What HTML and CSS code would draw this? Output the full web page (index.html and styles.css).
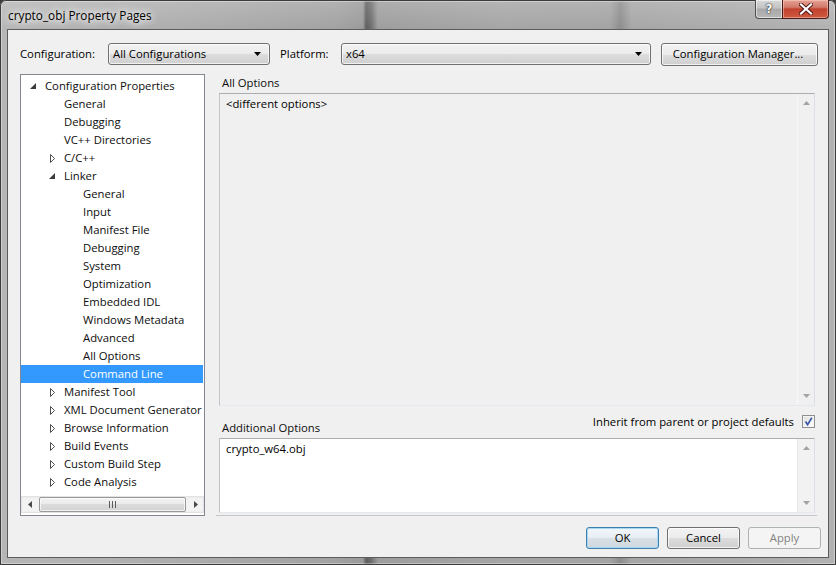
FILE: index.html
```html
<!DOCTYPE html>
<html>
<head>
<meta charset="utf-8">
<title>crypto_obj Property Pages</title>
<link rel="stylesheet" href="styles.css">
</head>
<body>
<div class="window">
  <div class="titlebar">
    <span class="title">crypto_obj Property Pages</span>
    <div class="caption">
      <div class="cap-help">?</div>
      <div class="cap-close">
        <svg width="14" height="12" viewBox="0 0 14 12"><path d="M2 1.5L12 10.5M12 1.5L2 10.5" stroke="#4a1410" stroke-width="4" stroke-linecap="square"/><path d="M2 1.5L12 10.5M12 1.5L2 10.5" stroke="#fff" stroke-width="2.2" stroke-linecap="square"/></svg>
      </div>
    </div>
  </div>
  <div class="client">
    <div class="toprow">
      <span class="lbl lbl-config">Configuration:</span>
      <div class="combo combo-config"><span class="combo-text">All Configurations</span><svg class="combo-arrow" width="7" height="4" viewBox="0 0 7 4"><path d="M0 0H7L3.5 4Z" fill="#000"/></svg></div>
      <span class="lbl lbl-platform">Platform:</span>
      <div class="combo combo-platform"><span class="combo-text">x64</span><svg class="combo-arrow" width="7" height="4" viewBox="0 0 7 4"><path d="M0 0H7L3.5 4Z" fill="#000"/></svg></div>
      <div class="btn btn-cfgmgr">Configuration Manager...</div>
    </div>

    <div class="main">
      <div class="tree">
        <ul class="nodes">
          <li class="node l0"><span class="exp"><svg width="6" height="6" viewBox="0 0 6 6"><path d="M6 0V6H0Z" fill="#3c3c3c"/></svg></span>Configuration Properties</li>
          <li class="node l1"><span class="exp"></span>General</li>
          <li class="node l1"><span class="exp"></span>Debugging</li>
          <li class="node l1"><span class="exp"></span>VC++ Directories</li>
          <li class="node l1"><span class="exp col"><svg width="5" height="9" viewBox="0 0 5 9"><path d="M0.5 0.5V8.5L4.5 4.5Z" fill="none" stroke="#4f4f4f"/></svg></span>C/C++</li>
          <li class="node l1"><span class="exp"><svg width="6" height="6" viewBox="0 0 6 6"><path d="M6 0V6H0Z" fill="#3c3c3c"/></svg></span>Linker</li>
          <li class="node l2"><span class="exp"></span>General</li>
          <li class="node l2"><span class="exp"></span>Input</li>
          <li class="node l2"><span class="exp"></span>Manifest File</li>
          <li class="node l2"><span class="exp"></span>Debugging</li>
          <li class="node l2"><span class="exp"></span>System</li>
          <li class="node l2"><span class="exp"></span>Optimization</li>
          <li class="node l2"><span class="exp"></span>Embedded IDL</li>
          <li class="node l2"><span class="exp"></span>Windows Metadata</li>
          <li class="node l2"><span class="exp"></span>Advanced</li>
          <li class="node l2"><span class="exp"></span>All Options</li>
          <li class="node l2 selected"><span class="exp"></span>Command Line</li>
          <li class="node l1"><span class="exp col"><svg width="5" height="9" viewBox="0 0 5 9"><path d="M0.5 0.5V8.5L4.5 4.5Z" fill="none" stroke="#4f4f4f"/></svg></span>Manifest Tool</li>
          <li class="node l1"><span class="exp col"><svg width="5" height="9" viewBox="0 0 5 9"><path d="M0.5 0.5V8.5L4.5 4.5Z" fill="none" stroke="#4f4f4f"/></svg></span>XML Document Generator</li>
          <li class="node l1"><span class="exp col"><svg width="5" height="9" viewBox="0 0 5 9"><path d="M0.5 0.5V8.5L4.5 4.5Z" fill="none" stroke="#4f4f4f"/></svg></span>Browse Information</li>
          <li class="node l1"><span class="exp col"><svg width="5" height="9" viewBox="0 0 5 9"><path d="M0.5 0.5V8.5L4.5 4.5Z" fill="none" stroke="#4f4f4f"/></svg></span>Build Events</li>
          <li class="node l1"><span class="exp col"><svg width="5" height="9" viewBox="0 0 5 9"><path d="M0.5 0.5V8.5L4.5 4.5Z" fill="none" stroke="#4f4f4f"/></svg></span>Custom Build Step</li>
          <li class="node l1"><span class="exp col"><svg width="5" height="9" viewBox="0 0 5 9"><path d="M0.5 0.5V8.5L4.5 4.5Z" fill="none" stroke="#4f4f4f"/></svg></span>Code Analysis</li>
        </ul>
        <div class="hscroll">
          <div class="sb-btn"><svg width="4" height="7" viewBox="0 0 4 7"><path d="M4 0V7L0 3.5Z" fill="#4a4a4a"/></svg></div>
          <div class="sb-track">
            <div class="sb-thumb"><svg width="7" height="7" viewBox="0 0 7 7"><path d="M0.5 0V7M3.5 0V7M6.5 0V7" stroke="#5c5c5c" stroke-width="1"/></svg></div>
          </div>
          <div class="sb-btn"><svg width="4" height="7" viewBox="0 0 4 7"><path d="M0 0V7L4 3.5Z" fill="#4a4a4a"/></svg></div>
        </div>
      </div>

      <div class="props">
        <div class="cap-label cap-all">All Options</div>
        <div class="textbox tb-all">
          <div class="tb-content">&lt;different options&gt;</div>
          <div class="vscroll">
            <svg width="7" height="4" viewBox="0 0 7 4"><path d="M0 4H7L3.5 0Z" fill="#a3a3a3"/></svg>
            <svg width="7" height="4" viewBox="0 0 7 4"><path d="M0 0H7L3.5 4Z" fill="#a3a3a3"/></svg>
          </div>
        </div>
        <div class="midrow">
          <div class="cap-label cap-add">Additional Options</div>
          <div class="inherit">
            <span class="inherit-text">Inherit from parent or project defaults</span>
            <span class="check"><svg width="11" height="11" viewBox="0 0 11 11"><path d="M2.5 5.5L4.6 8.6L8.8 1.8" fill="none" stroke="#3b58a6" stroke-width="1.7"/></svg></span>
          </div>
        </div>
        <div class="textbox tb-add">
          <div class="tb-content">crypto_w64.obj</div>
          <div class="vscroll">
            <svg width="7" height="4" viewBox="0 0 7 4"><path d="M0 4H7L3.5 0Z" fill="#a3a3a3"/></svg>
            <svg width="7" height="4" viewBox="0 0 7 4"><path d="M0 0H7L3.5 4Z" fill="#a3a3a3"/></svg>
          </div>
        </div>
        <div class="sep"></div>
      </div>
    </div>

    <div class="buttons">
      <div class="btn btn-ok">OK</div>
      <div class="btn btn-cancel">Cancel</div>
      <div class="btn btn-apply">Apply</div>
    </div>
  </div>
</div>
</body>
</html>
```
FILE: styles.css
```css
* { box-sizing: border-box; }

html, body {
  margin: 0;
  padding: 0;
}

body {
  width: 836px;
  height: 565px;
  overflow: hidden;
  background: #3a3a3a;
  font-family: "Open Sans", "Noto Sans", sans-serif;
  font-size: 11.3px;
  color: #000;
}

.window {
  width: 836px;
  height: 565px;
  padding: 0 7px 7px 7px;
  display: flex;
  flex-direction: column;
  border-radius: 6px 6px 0 0;
  background:
    linear-gradient(to bottom, rgba(255,255,255,0.18) 0, rgba(255,255,255,0.05) 22px, rgba(0,0,0,0) 30px),
    linear-gradient(to right,
      #b6b6b6 0, #adadad 20%, #a2a2a2 40%, #9a9a9a 43.4%,
      #5e5e5e 43.8%, #6e6e6e 44.4%, #9d9d9d 45.2%,
      #a5a5a5 60%, #a3a3a3 73%, #8c8c8c 74.2%, #a6a6a6 75.5%,
      #acacac 90%, #b2b2b2 100%);
  box-shadow: inset 0 0 0 1px #3c3c3c, inset 0 0 0 2px rgba(255,255,255,0.35);
}

/* ---------- title bar ---------- */
.titlebar {
  height: 29px;
  display: flex;
  align-items: flex-start;
  flex: none;
}

.title {
  margin: 7px 0 0 1px;
  line-height: 16px;
  font-size: 11.8px;
  color: #000;
  text-shadow: 0 0 6px #fff, 0 0 10px rgba(255,255,255,0.9), 0 0 14px rgba(255,255,255,0.7);
}

.caption {
  margin-left: auto;
  display: flex;
  margin-right: 0;
}

.cap-help {
  width: 27px;
  height: 19px;
  border: 1px solid #4d4d4d;
  border-top: none;
  border-right: none;
  border-radius: 0 0 0 4px;
  background: linear-gradient(to bottom, #d8d8d8 0, #c3c3c3 45%, #a8a8a8 50%, #b8b8b8 100%);
  box-shadow: inset 0 0 0 1px rgba(255,255,255,0.55);
  font-family: "DejaVu Sans", sans-serif;
  font-weight: bold;
  font-size: 12px;
  line-height: 18px;
  text-align: center;
  color: #fff;
  text-shadow: 0 0 2px #222, 0 0 1px #000;
}

.cap-close {
  width: 47px;
  height: 19px;
  border: 1px solid #4a1a16;
  border-top: none;
  border-radius: 0 0 4px 0;
  background: linear-gradient(to bottom, #e5a195 0, #d27a6a 40%, #c2412f 50%, #cf5a3e 100%);
  box-shadow: inset 0 0 0 1px rgba(255,220,210,0.45);
  display: flex;
  align-items: center;
  justify-content: center;
}

/* ---------- client area ---------- */
.client {
  flex: 1;
  border: 1px solid #5c5c5c;
  background: #f0f0f0;
  display: flex;
  flex-direction: column;
  padding: 13px 0 8px 12px;
}

.toprow {
  height: 23px;
  display: flex;
  align-items: flex-start;
  flex: none;
}

.lbl {
  line-height: 22px;
  color: #000;
}

.lbl-config { width: 88px; }
.lbl-platform { width: 61px; margin-left: 10px; }

.combo {
  height: 22px;
  border: 1px solid #707070;
  border-radius: 3px;
  background: linear-gradient(to bottom, #f2f2f2 0, #ebebeb 50%, #dddddd 51%, #cfcfcf 100%);
  box-shadow: inset 0 0 0 1px rgba(255,255,255,0.7);
  display: flex;
  align-items: center;
  padding: 0 8px 0 4px;
}

.combo-text {
  flex: 1;
  line-height: 20px;
  color: #000;
}

.combo-config { width: 162px; }
.combo-platform { width: 310px; }

.btn {
  height: 22px;
  border: 1px solid #707070;
  border-radius: 3px;
  background: linear-gradient(to bottom, #f2f2f2 0, #ebebeb 50%, #dddddd 51%, #cfcfcf 100%);
  box-shadow: inset 0 0 0 1px rgba(255,255,255,0.75);
  text-align: center;
  line-height: 20px;
  color: #000;
}

.btn-cfgmgr {
  width: 157px;
  height: 23px;
  line-height: 20px;
  margin-left: 10px;
  padding-right: 3px;
}

/* ---------- main ---------- */
.main {
  margin-top: 8px;
  height: 442px;
  display: flex;
  gap: 14px;
  flex: none;
}

.tree {
  width: 185px;
  height: 442px;
  border: 1px solid #828790;
  background: #fff;
  display: flex;
  flex-direction: column;
}

.nodes {
  list-style: none;
  margin: 0;
  padding: 2px 0 0 0;
  flex: 1;
  overflow: hidden;
  white-space: nowrap;
}

.node {
  height: 18px;
  line-height: 18px;
  display: flex;
  align-items: center;
  color: #0d0d0d;
}

.node.l0 { padding-left: 9px; }
.node.l1 { padding-left: 28px; }
.node.l2 { padding-left: 47px; }

.exp {
  width: 15px;
  flex: none;
  display: flex;
  align-items: center;
  padding-left: 0;
}

.exp.col { padding-left: 1px; }

.node.selected {
  background: #3399ff;
  color: #fff;
  margin-right: 1px;
}

.hscroll {
  height: 17px;
  margin-bottom: 2px;
  display: flex;
  background: linear-gradient(to bottom, #e6e6e6 0, #f2f2f2 3px, #f4f4f4 14px, #e9e9e9 100%);
  box-shadow: inset 0 0 0 1px #e2e2e2;
  flex: none;
}

.sb-btn {
  width: 17px;
  display: flex;
  align-items: center;
  justify-content: center;
}

.sb-track {
  flex: 1;
  padding: 1px 1px 1px 1px;
  display: flex;
}

.sb-thumb {
  flex: 1;
  border: 1px solid #989898;
  border-radius: 2px;
  background: linear-gradient(to bottom, #f3f3f3 0, #ebebeb 45%, #dbdbdb 50%, #d3d3d3 100%);
  box-shadow: inset 0 0 0 1px rgba(255,255,255,0.7);
  display: flex;
  align-items: center;
  justify-content: center;
}

/* ---------- property panel ---------- */
.props {
  width: 596px;
  height: 442px;
  display: flex;
  flex-direction: column;
}

.cap-label {
  color: #0d0d0d;
  line-height: 16px;
}

.cap-all {
  height: 19px;
  padding: 1px 0 0 3px;
  flex: none;
}

.textbox {
  display: flex;
  border-style: solid;
  border-width: 1px;
  border-color: #abadb3 #dbdfe6 #e3e9ef #c2c4ca;
  flex: none;
}

.tb-all {
  height: 313px;
  background: #f0f0f0;
}

.tb-add {
  height: 75px;
  background: #fff;
}

.tb-content {
  flex: 1;
  padding: 2px 0 0 6px;
  line-height: 16px;
  color: #000;
}

.vscroll {
  width: 17px;
  display: flex;
  flex-direction: column;
  justify-content: space-between;
  align-items: center;
  padding: 7px 0 7px 0;
  background: #f2f2f2;
  border-left: 1px solid #e6e6e6;
}

.tb-all .vscroll {
  border-left-color: #f8f8f8;
  background: #f0f0f0;
}

.midrow {
  height: 32px;
  display: flex;
  justify-content: space-between;
  flex: none;
}

.cap-add {
  align-self: flex-end;
  padding: 0 0 2px 3px;
}

.inherit {
  display: flex;
  align-items: flex-start;
  padding-top: 8px;
}

.inherit-text {
  line-height: 16px;
  color: #000;
}

.check {
  width: 13px;
  height: 13px;
  margin: 1px 0 0 8px;
  border: 1px solid #8e8f8f;
  background: linear-gradient(135deg, #dcdcdc 0, #f4f4f4 60%, #ffffff 100%);
  box-shadow: inset 0 0 0 1px #f4f4f4;
  display: flex;
  align-items: center;
  justify-content: center;
}

.sep {
  margin: 2px -2px 0 -3px;
  height: 1px;
  background: #c6c6c6;
  flex: none;
}

/* ---------- dialog buttons ---------- */
.buttons {
  margin-top: 11px;
  margin-right: 7px;
  display: flex;
  justify-content: flex-end;
  gap: 8px;
  flex: none;
}

.buttons .btn { width: 73px; }

.btn-ok {
  border-color: #3c7fb1;
  background: linear-gradient(to bottom, #f1f6fa 0, #e7eef3 50%, #d9e1e7 51%, #cfd8df 100%);
  box-shadow: inset 0 0 0 1px #a8d6f3;
}

.btn-apply {
  border-color: #adb2b5;
  background: #f4f4f4;
  box-shadow: none;
  color: #838383;
}
```
